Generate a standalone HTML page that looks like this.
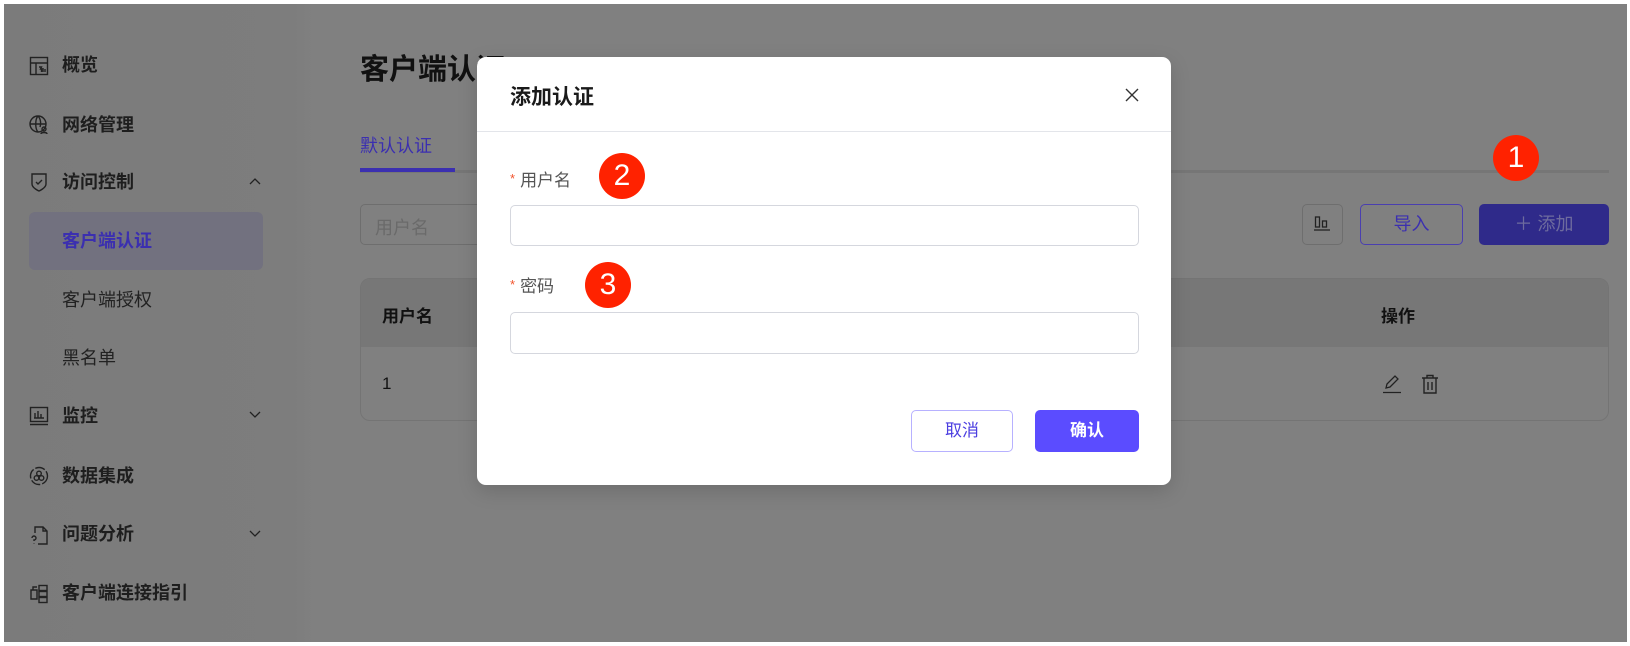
<!DOCTYPE html>
<html><head><meta charset="utf-8"><style>
*{box-sizing:border-box;margin:0;padding:0}
body{width:1630px;height:646px;background:#fff;position:relative;overflow:hidden;font-family:"Liberation Sans","Noto Sans CJK SC",sans-serif}
.abs{position:absolute}
#bg{left:4px;top:4px;width:1623px;height:638px;background:linear-gradient(90deg,#7b7b7b 0,#7d7d7d 290px,#808080 310px,#808080 100%);overflow:hidden}
.nav{position:absolute;left:58px;font-size:18px;color:#1e1e1e;font-weight:600;line-height:20px}
.ico{position:absolute;left:25px;width:20px;height:20px}
.chev{position:absolute;left:245px;width:12px;height:8px}
.sub{font-weight:400;color:#222}
.badge{position:absolute;width:46px;height:46px;border-radius:50%;background:#ff2200;color:#fff;font-size:30px;text-align:center;line-height:46px;font-weight:500}
.inp{position:absolute;border:1px solid #d5d7de;border-radius:5px;background:#fff}
</style></head><body>
<div id="bg" class="abs">
 <svg class="ico" style="top:52px" viewBox="0 0 20 20" fill="none" stroke="#222" stroke-width="1.4"><rect x="1.5" y="1.5" width="17" height="17"/><path d="M1.5 7h17M7 7v11.5M10 11h2.5l-1 2h1v3M14 12v4M16 13v3"/></svg>
 <div class="nav" style="top:51px">概览</div>
 <svg class="ico" style="top:111px" viewBox="0 0 20 20" fill="none" stroke="#222" stroke-width="1.4"><circle cx="9" cy="9" r="8"/><path d="M1 9h16M9 1c-3 3-3 13 0 16M9 1c3 3 3 8 2 11"/><circle cx="15" cy="14" r="2"/><path d="M12 19c0-2 6-2 6 0"/></svg>
 <div class="nav" style="top:111px">网络管理</div>
 <svg class="ico" style="top:168px" viewBox="0 0 20 20" fill="none" stroke="#222" stroke-width="1.4"><path d="M3 2h14v10c0 4-7 7-7 7s-7-3-7-7z"/><path d="M7 10l2 2 4-4"/></svg>
 <div class="nav" style="top:168px">访问控制</div>
 <svg class="chev" style="top:173px" viewBox="0 0 12 8" fill="none" stroke="#222" stroke-width="1.3"><path d="M1 7l5-5 5 5"/></svg>
 <div class="abs" style="left:25px;top:208px;width:234px;height:58px;background:#72717f;border-radius:6px"></div>
 <div class="nav" style="top:227px;color:#3b2fb0">客户端认证</div>
 <div class="nav sub" style="top:286px">客户端授权</div>
 <div class="nav sub" style="top:344px">黑名单</div>
 <svg class="ico" style="top:402px" viewBox="0 0 20 20" fill="none" stroke="#222" stroke-width="1.4"><rect x="1.5" y="1.5" width="17" height="14"/><path d="M1 18.5h18M6 12V7M9 12V5M12 12V8M15 12h-10"/></svg>
 <div class="nav" style="top:402px">监控</div>
 <svg class="chev" style="top:407px" viewBox="0 0 12 8" fill="none" stroke="#222" stroke-width="1.3"><path d="M1 1l5 5 5-5"/></svg>
 <svg class="ico" style="top:462px" viewBox="0 0 20 20" fill="none" stroke="#222" stroke-width="1.4"><circle cx="10" cy="10" r="8.5" stroke-dasharray="10 2"/><circle cx="10" cy="7.5" r="2.3"/><circle cx="7.5" cy="12" r="2.3"/><circle cx="12.5" cy="12" r="2.3"/></svg>
 <div class="nav" style="top:462px">数据集成</div>
 <svg class="ico" style="top:521px" viewBox="0 0 20 20" fill="none" stroke="#222" stroke-width="1.4"><path d="M6 8V2h8l4 4v13h-9M14 2v4h4"/><path d="M3 13a2 2 0 1 1 2 2v1M5 18v.5"/></svg>
 <div class="nav" style="top:520px">问题分析</div>
 <svg class="chev" style="top:526px" viewBox="0 0 12 8" fill="none" stroke="#222" stroke-width="1.3"><path d="M1 1l5 5 5-5"/></svg>
 <svg class="ico" style="top:580px" viewBox="0 0 20 20" fill="none" stroke="#222" stroke-width="1.4"><rect x="10" y="1.5" width="8" height="5"/><rect x="10" y="7.5" width="8" height="5"/><rect x="10" y="13.5" width="8" height="5"/><path d="M2 6h6v9H2zM4 6V3h4"/></svg>
 <div class="nav" style="top:579px">客户端连接指引</div>

 <div class="abs" style="left:356px;top:42px;font-size:29px;font-weight:700;color:#111">客户端认证</div>
 <div class="abs" style="left:356px;top:128px;font-size:18px;color:#3b2fb0">默认认证</div>
 <div class="abs" style="left:356px;top:166px;width:1249px;height:3px;background:#767676"></div>
 <div class="abs" style="left:356px;top:164px;width:95px;height:4px;background:#3b2fb0"></div>
 <div class="abs" style="left:356px;top:200px;width:200px;height:41px;border:1px solid #6e6e6e;border-radius:5px;font-size:18px;color:#6a6a6a;padding:9px 14px">用户名</div>
 <div class="abs" style="left:1298px;top:200px;width:41px;height:41px;border:1px solid #6e6e6e;border-radius:5px"></div>
 <svg class="abs" style="left:1309px;top:211px" width="18" height="18" viewBox="0 0 18 18" fill="none" stroke="#222" stroke-width="1.3"><rect x="2.5" y="2" width="4" height="10"/><rect x="9.5" y="6" width="4" height="6"/><path d="M1 15h16"/></svg>
 <div class="abs" style="left:1356px;top:200px;width:103px;height:41px;border:1px solid #4a3fb0;border-radius:5px;font-size:18px;color:#3b2fb0;text-align:center;line-height:39px">导入</div>
 <div class="abs" style="left:1475px;top:200px;width:130px;height:41px;background:#2f2a8a;border-radius:5px;font-size:18px;color:#6e6b9e;text-align:center;line-height:41px">＋ 添加</div>
 <div class="badge" style="left:1489px;top:131px">1</div>
 <div class="abs" style="left:356px;top:274px;width:1249px;height:143px;border:1px solid #747474;border-radius:10px;overflow:hidden">
  <div style="height:68px;background:#777;"></div>
 </div>
 <div class="abs" style="left:378px;top:298px;font-size:17px;font-weight:700;color:#111">用户名</div>
 <div class="abs" style="left:1377px;top:298px;font-size:17px;font-weight:700;color:#111">操作</div>
 <div class="abs" style="left:378px;top:370px;font-size:17px;color:#111">1</div>
 <svg class="abs" style="left:1378px;top:370px" width="20" height="20" viewBox="0 0 20 20" fill="none" stroke="#222" stroke-width="1.3"><path d="M4 14l1-4 8-8 3 3-8 8zM1 18.5h18"/></svg>
 <svg class="abs" style="left:1417px;top:370px" width="18" height="20" viewBox="0 0 18 20" fill="none" stroke="#222" stroke-width="1.4"><path d="M1 4h16M6 4V1.5h6V4M3 4v15h12V4M7 8v8M11 8v8"/></svg>

 <div class="abs" style="left:473px;top:53px;width:694px;height:428px;background:#fff;border-radius:9px;box-shadow:0 6px 20px rgba(0,0,0,.15)">
  <div class="abs" style="left:33px;top:24px;font-size:21px;font-weight:700;color:#1a1a1a">添加认证</div>
  <svg class="abs" style="left:647px;top:30px" width="16" height="16" viewBox="0 0 16 16" stroke="#333" stroke-width="1.4"><path d="M2 2l12 12M14 2L2 14"/></svg>
  <div class="abs" style="left:0;top:74px;width:694px;height:1px;background:#e3e5ea"></div>
  <div class="abs" style="left:33px;top:109px;font-size:17px;color:#555"><span style="color:#f2542d;font-size:13px;margin-right:5px;vertical-align:3px">*</span>用户名</div>
  <div class="badge" style="left:122px;top:96px">2</div>
  <div class="inp" style="left:33px;top:148px;width:629px;height:41px"></div>
  <div class="abs" style="left:33px;top:215px;font-size:17px;color:#555"><span style="color:#f2542d;font-size:13px;margin-right:5px;vertical-align:3px">*</span>密码</div>
  <div class="badge" style="left:108px;top:205px">3</div>
  <div class="inp" style="left:33px;top:255px;width:629px;height:42px"></div>
  <div class="abs" style="left:434px;top:353px;width:102px;height:42px;border:1px solid #b7b1ff;border-radius:5px;font-size:17px;color:#4c3fe0;text-align:center;line-height:40px">取消</div>
  <div class="abs" style="left:558px;top:353px;width:104px;height:42px;background:#5b4cff;border-radius:5px;font-size:17px;font-weight:600;color:#fff;text-align:center;line-height:42px">确认</div>
 </div>
</div>
</body></html>
